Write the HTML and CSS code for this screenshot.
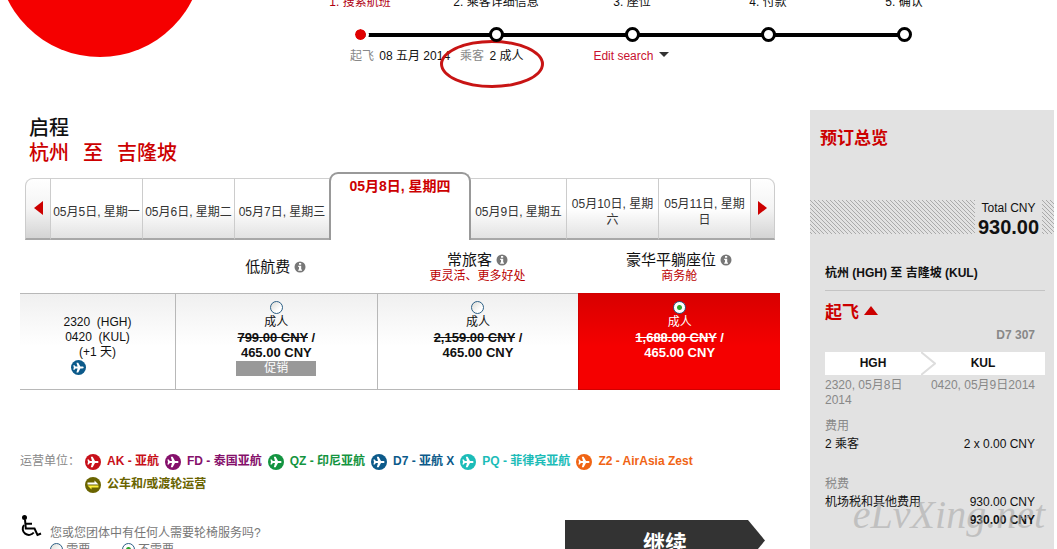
FILE: index.html
```html
<!DOCTYPE html>
<html lang="zh-CN">
<head>
    <meta charset="UTF-8">
    <meta name="viewport" content="width=device-width, initial-scale=1.0">
    <title>选择航班</title>
    <link rel="stylesheet" href="styles.css">
</head>
<body>
    <!-- shared icons -->
    <svg class="sprite" aria-hidden="true">
        <symbol id="plane" viewBox="0 0 16 16">
            <circle cx="8" cy="8" r="8" fill="currentColor"/>
            <path fill="#fff" d="M13.500 8c0 .6-.5 1-1.300 1H10l-2.300 4.200H5.800L7 9H4.800l-1 1.500H2.400L3 8l-.6-2.500h1.400l1 1.500H7L5.800 2.800h1.900L10 7h2.200c.8 0 1.300.4 1.300 1z"/>
        </symbol>
        <symbol id="bus" viewBox="0 0 16 16">
            <circle cx="8" cy="8" r="8" fill="currentColor"/>
            <path fill="#fff" d="M2.500 7.500h11L9.500 3.500v2h-7z"/>
            <path fill="#ffef3a" d="M13.500 8.500h-11l4 4v-2h7z"/>
        </symbol>
        <symbol id="info" viewBox="0 0 12 12">
            <circle cx="6" cy="6" r="5.500" fill="#777"/>
            <path fill="#fff" d="M5 2h2.200v1.800H5zM4.200 4.700h3V8.500h.8v1.200H4.200V8.500H5V5.900h-.8z"/>
        </symbol>
    </svg>

    <header class="header">
        <div class="logo"></div>
        <div class="progress">
            <ol class="steps">
                <li class="step active">1. 搜索航班</li>
                <li class="step">2. 乘客详细信息</li>
                <li class="step">3. 座位</li>
                <li class="step">4. 付款</li>
                <li class="step">5. 确认</li>
            </ol>
            <div class="search-info">
                <p class="criteria"><span class="muted">起飞</span> 08 五月 2014</p>
                <p class="criteria passengers"><span class="muted">乘客</span> 2 成人</p>
                <a href="#" class="edit-search">Edit search <span class="caret"></span></a>
            </div>
        </div>
    </header>

    <div class="page">
        <main class="main">
            <h1 class="title">启程</h1>
            <h2 class="route"><span>杭州</span><span>至</span><span>吉隆坡</span></h2>

            <nav class="days">
                <button class="day nav prev" aria-label="前一天"><span class="arrow-left"></span></button>
                <button class="day">05月5日, 星期一</button>
                <button class="day">05月6日, 星期二</button>
                <button class="day">05月7日, 星期三</button>
                <button class="day selected">05月8日, 星期四</button>
                <button class="day">05月9日, 星期五</button>
                <button class="day">05月10日, 星期六</button>
                <button class="day">05月11日, 星期日</button>
                <button class="day nav next" aria-label="后一天"><span class="arrow-right"></span></button>
            </nav>

            <table class="fares">
                <thead>
                    <tr>
                        <th class="time"></th>
                        <th>低航费 <svg class="info"><use href="#info"/></svg></th>
                        <th>常旅客 <svg class="info"><use href="#info"/></svg><span class="sub">更灵活、更多好处</span></th>
                        <th>豪华平躺座位 <svg class="info"><use href="#info"/></svg><span class="sub">商务舱</span></th>
                    </tr>
                </thead>
                <tbody>
                    <tr>
                        <td class="time">
                            2320&nbsp; (HGH)<br>
                            0420&nbsp; (KUL)<br>
                            (+1 天)
                            <svg class="carrier d7"><use href="#plane"/></svg>
                        </td>
                        <td>
                            <label class="fare">
                                <input type="radio" name="fare">
                                <span>成人</span>
                                <span class="price"><s>799.00 CNY</s> /</span>
                                <span class="price">465.00 CNY</span>
                                <span class="promo">促销</span>
                            </label>
                        </td>
                        <td>
                            <label class="fare">
                                <input type="radio" name="fare">
                                <span>成人</span>
                                <span class="price"><s>2,159.00 CNY</s> /</span>
                                <span class="price">465.00 CNY</span>
                            </label>
                        </td>
                        <td class="chosen">
                            <label class="fare">
                                <input type="radio" name="fare" checked>
                                <span>成人</span>
                                <span class="price"><s>1,688.00 CNY</s> /</span>
                                <span class="price">465.00 CNY</span>
                            </label>
                        </td>
                    </tr>
                </tbody>
            </table>

            <div class="operators">
                <span class="operators-label">运营单位：</span>
                <ul class="operator-list">
                    <li class="ak"><svg class="icon"><use href="#plane"/></svg>AK - 亚航</li>
                    <li class="fd"><svg class="icon"><use href="#plane"/></svg>FD - 泰国亚航</li>
                    <li class="qz"><svg class="icon"><use href="#plane"/></svg>QZ - 印尼亚航</li>
                    <li class="d7"><svg class="icon"><use href="#plane"/></svg>D7 - 亚航 X</li>
                    <li class="pq"><svg class="icon"><use href="#plane"/></svg>PQ - 菲律宾亚航</li>
                    <li class="z2"><svg class="icon"><use href="#plane"/></svg>Z2 - AirAsia Zest</li>
                    <li class="bus"><svg class="icon"><use href="#bus"/></svg>公车和/或渡轮运营</li>
                </ul>
            </div>

            <div class="actions">
                <svg class="wheelchair" viewBox="0 0 22 23" fill="none" stroke="#000" stroke-width="2">
                    <circle cx="4.500" cy="2.500" r="2.500" fill="#000" stroke="none"/>
                    <path d="M5 4.500l.8 9h8.700l3 6.500 3.500-1.500M5.500 8.800h6.500"/>
                    <path d="M4 10a6 6 0 1 0 9.800 7.500"/>
                </svg>
                <fieldset class="assist">
                    <legend>您或您团体中有任何人需要轮椅服务吗?</legend>
                    <label><input type="radio" name="wheelchair"> 需要</label>
                    <label><input type="radio" name="wheelchair" checked> 不需要</label>
                </fieldset>
                <button class="continue">继续</button>
            </div>
        </main>

        <aside class="summary">
            <h3 class="summary-title">预订总览</h3>
            <div class="total">
                <div class="total-box">
                    Total CNY
                    <strong>930.00</strong>
                </div>
            </div>
            <div class="details">
                <p class="journey">杭州 (HGH) 至 吉隆坡 (KUL)</p>
                <h4 class="depart">起飞 <span class="arrow-up"></span></h4>
                <p class="flight-no">D7 307</p>
                <div class="airports">
                    <span>HGH</span>
                    <svg class="chevron" viewBox="0 0 15 23"><path d="M0 0l14 11.500L0 23" fill="none" stroke="#ddd" stroke-width="2"/></svg>
                    <span>KUL</span>
                </div>
                <div class="times">
                    <span>2320, 05月8日 2014</span>
                    <span>0420, 05月9日2014</span>
                </div>
                <h5 class="cost-title">费用</h5>
                <p class="cost"><span>2 乘客</span><span>2 x 0.00 CNY</span></p>
                <h5 class="cost-title taxes">税费</h5>
                <p class="cost"><span>机场税和其他费用</span><span>930.00 CNY</span></p>
                <p class="cost"><span></span><strong>930.00 CNY</strong></p>
            </div>
            <span class="watermark">eLvXing.net</span>
        </aside>
    </div>
</body>
</html>
```
FILE: styles.css
```css
*, *::before, *::after {
    box-sizing: border-box;
}
body {
    margin: 0;
    height: 100vh;
    overflow: hidden;
    background: #fff;
    color: #111;
    font-family: "Liberation Sans", Arial, "Noto Sans CJK SC", sans-serif;
    font-size: 12px;
    line-height: 16px;
}
h1, h2, h3, h4, h5, p, ol, ul {
    margin: 0;
    padding: 0;
}
ol, ul { list-style: none; }
button {
    font-family: inherit;
    cursor: pointer;
}
.sprite {
    display: none;
}

/* header */
.header {
    display: flex;
    height: 110px;
    overflow: hidden;
}
.logo {
    flex: none;
    width: 206px;
    height: 206px;
    margin: -149px 0 0 -3px;
    border-radius: 50%;
    background: #f50000;
}
.progress {
    flex: 1;
    margin: -6px 85px 0 89px;
}
.steps {
    display: grid;
    grid-template-columns: repeat(5, 1fr);
}
.step {
    display: flex;
    flex-direction: column;
    align-items: center;
    gap: 17px;
    position: relative;
}
.step::after {
    content: "";
    width: 15px;
    height: 15px;
    border: 3px solid #000;
    border-radius: 50%;
    background: #fff;
    z-index: 1;
}
/* line back to the previous step */
.step + .step::before {
    content: "";
    position: absolute;
    right: 50%;
    bottom: 5px;
    width: 100%;
    height: 4px;
    background: #000;
}
.step.active { color: #b00010; }
.step.active::after {
    border: 2px solid #fff;
    background: #e00000;
    background-clip: padding-box;
    box-shadow: 0 0 0 1px #fff;
    z-index: 2;
}
.search-info {
    display: flex;
    padding: 6px 0 0 58px;
}
.criteria {
    white-space: pre;
    margin-right: 10px;
}
.muted {
    color: #888;
    margin-right: 2px;
}
.passengers {
    position: relative;
    margin-right: 70px;
}
.passengers::after {
    content: "";
    position: absolute;
    left: -20px;
    top: -8px;
    width: 104px;
    height: 48px;
    border: 3px solid #c81414;
    border-radius: 50%;
}
.edit-search {
    color: #c8102e;
    text-decoration: none;
}
.caret {
    display: inline-block;
    border: 5px solid transparent;
    border-top-color: #333;
    border-bottom: 0;
    margin: 0 0 3px 2px;
}

/* page */
.page {
    display: flex;
    gap: 30px;
    padding: 0 3px 0 20px;
}
.main {
    flex: 1;
    padding-top: 6px;
}
.title, .route {
    font-size: 20px;
    line-height: 25px;
    font-weight: 500;
    padding-left: 9px;
}
.route {
    display: flex;
    gap: 14px;
    color: #c00;
}

/* date tabs */
.days {
    display: grid;
    grid-template-columns: 25px 92fr 92fr 95fr 142px 95fr 92fr 92fr 25px;
    align-items: end;
    margin: 6px 5px 0;
}
.day {
    height: 62px;
    padding: 6px 1px 0;
    border: 0;
    border-top: 1px solid #d0d0d0;
    border-bottom: 2px solid #a8a8a8;
    border-left: 1px solid #ccc;
    background: linear-gradient(#fff 50%, #e2e2e2);
    color: #333;
    font-size: 12px;
    line-height: 16px;
}
.day.nav {
    padding: 2px 0 0;
    background: linear-gradient(#fff, #f4f4f4 50%, #d4d4d4);
}
.day.prev { border-top-left-radius: 8px; }
.day.next { border-top-right-radius: 8px; border-right: 1px solid #ccc; }
.day.selected {
    height: 68px;
    padding: 0 0 42px;
    border: 2px solid #999;
    border-bottom: 0;
    border-radius: 9px 9px 0 0;
    background: #fff;
    color: #c00;
    font-size: 14px;
    font-weight: bold;
}
.day.selected + .day { border-left: 0; }
.arrow-left, .arrow-right, .arrow-up {
    display: inline-block;
    border: 7px solid transparent;
}
.arrow-left {
    border-left: 0;
    border-right: 9px solid #c00;
}
.arrow-right {
    border-right: 0;
    border-left: 9px solid #c00;
}
.arrow-up {
    border-width: 0 7px 9px;
    border-bottom-color: #c00;
    margin-bottom: 3px;
}

/* fares */
.fares {
    width: 100%;
    table-layout: fixed;
    border-collapse: separate;
    border-spacing: 0;
}
.fares th {
    height: 53px;
    padding: 0;
    font-size: 15px;
    line-height: 18px;
    font-weight: normal;
    vertical-align: middle;
}
.fares .time { width: 155px; }
.info {
    width: 12px;
    height: 12px;
    vertical-align: -1px;
}
.sub {
    display: block;
    color: #b00;
    font-size: 12px;
    line-height: 14px;
}
.fares td {
    height: 97px;
    padding: 7px 0 0;
    border: 1px solid #b8b8b8;
    border-width: 1px 0 1px 1px;
    background: linear-gradient(#f0f0f0, #fff 55%);
    text-align: center;
    vertical-align: top;
    line-height: 15px;
}
.fares td.time {
    padding-top: 21px;
    border-left: 0;
}
.fares td.chosen {
    border-color: #d00000;
    background: linear-gradient(#d80000, #f50000 55%);
    color: #fff;
}
.carrier {
    display: block;
    width: 15px;
    height: 15px;
    margin: 0 0 0 51px;
}
.fare {
    display: flex;
    flex-direction: column;
    align-items: center;
}
.price {
    font-size: 13px;
    font-weight: bold;
}
.price + .price { line-height: 16px; }
.promo {
    width: 80px;
    background: #999;
    color: #fff;
}
input[type="radio"] {
    appearance: none;
    width: 13px;
    height: 13px;
    margin: 0 0 1px;
    border: 1px solid #2c5f85;
    border-radius: 50%;
    background: linear-gradient(135deg, #dcdcd6, #fff 70%);
}
input[type="radio"]:checked {
    background: radial-gradient(circle, #2fa52f 0 2px, #fff 3px);
}

/* operators */
.operators {
    display: flex;
    margin-top: 60px;
    line-height: 23px;
}
.operators-label {
    flex: none;
    width: 65px;
    color: #888;
    white-space: nowrap;
}
.operator-list {
    display: flex;
    flex-wrap: wrap;
    column-gap: 6px;
    font-weight: bold;
}
.operator-list li {
    display: flex;
    align-items: center;
    gap: 6px;
}
.icon {
    width: 16px;
    height: 16px;
}
.ak { color: #c8101a; }
.fd { color: #85106b; }
.qz { color: #149440; }
.d7 { color: #0c5a8a; }
.pq { color: #1cbcb8; }
.z2 { color: #f06414; }
.bus { color: #6a6400; }

/* wheelchair question and continue button */
.actions {
    display: flex;
    align-items: flex-start;
    padding: 19px 15px 0 0;
}
.wheelchair {
    flex: none;
    width: 22px;
    height: 23px;
    margin-right: 8px;
}
.assist {
    flex: 1;
    margin: 0;
    padding: 10px 0 0;
    border: 0;
    color: #777;
}
.assist legend {
    float: left;
    width: 100%;
    padding: 0;
    margin-bottom: 1px;
}
.assist label {
    display: inline-block;
    margin-right: 28px;
}
.assist input { vertical-align: -3px; }
.continue {
    width: 200px;
    height: 41px;
    margin-top: 5px;
    border: 0;
    background: #333;
    color: #fff;
    font-size: 22px;
    font-weight: bold;
    clip-path: polygon(0 0, calc(100% - 17px) 0, 100% 50%, calc(100% - 17px) 100%, 0 100%);
}

/* booking summary */
.summary {
    position: relative;
    flex: none;
    width: 244px;
    height: 460px;
    padding-top: 17px;
    background: #e2e2e2;
}
.summary-title {
    padding-left: 10px;
    color: #c00;
    font-size: 17px;
    line-height: 24px;
}
.total {
    display: flex;
    justify-content: flex-end;
    height: 34px;
    margin-top: 49px;
    padding-right: 12px;
    background: linear-gradient(45deg, #aaa 12%, #e2e2e2 12% 38%, #aaa 38% 62%, #e2e2e2 62% 88%, #aaa 88%);
    background-size: 4px 4px;
}
.total-box {
    width: 67px;
    background: #e2e2e2;
    text-align: center;
}
.total-box strong {
    display: block;
    font-size: 20px;
    line-height: 22px;
}
.details {
    padding: 31px 9px 0 15px;
}
.journey {
    padding-bottom: 9px;
    border-bottom: 1px solid #c4c4c4;
    font-weight: bold;
}
.depart {
    margin-top: 10px;
    color: #c00;
    font-size: 17px;
    line-height: 24px;
}
.flight-no {
    padding: 2px 10px 9px 0;
    color: #888;
    font-weight: bold;
    text-align: right;
}
.airports {
    display: grid;
    grid-template-columns: 96px 15px 1fr;
    padding-right: 15px;
    background: #fff;
    font-weight: bold;
    line-height: 23px;
    text-align: center;
}
.chevron {
    width: 15px;
    height: 23px;
}
.times {
    display: flex;
    justify-content: space-between;
    padding: 3px 10px 9px 0;
    color: #888;
    line-height: 15px;
}
.times span:first-child { width: 90px; }
.cost-title {
    color: #888;
    font-size: 12px;
    font-weight: normal;
    line-height: 18px;
}
.taxes { margin-top: 22px; }
.cost {
    display: flex;
    justify-content: space-between;
    padding-right: 10px;
    line-height: 18px;
}
.watermark {
    position: absolute;
    right: 9px;
    top: 385px;
    color: rgba(170, 170, 170, 0.6);
    font-family: "Liberation Serif", serif;
    font-size: 40px;
    font-style: italic;
    line-height: 40px;
}
```
